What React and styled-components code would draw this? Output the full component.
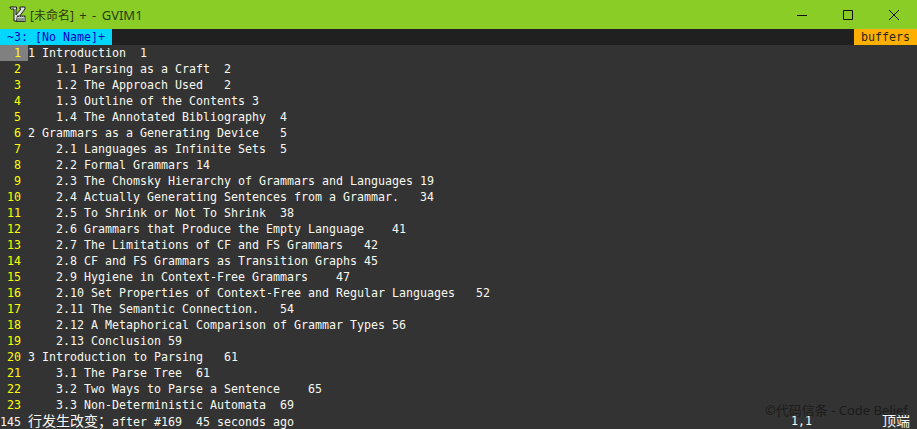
import React from "react";
import styled, { createGlobalStyle } from "styled-components";

const lines = [
    "1 Introduction  1",
    "    1.1 Parsing as a Craft  2",
    "    1.2 The Approach Used   2",
    "    1.3 Outline of the Contents 3",
    "    1.4 The Annotated Bibliography  4",
    "2 Grammars as a Generating Device   5",
    "    2.1 Languages as Infinite Sets  5",
    "    2.2 Formal Grammars 14",
    "    2.3 The Chomsky Hierarchy of Grammars and Languages 19",
    "    2.4 Actually Generating Sentences from a Grammar.   34",
    "    2.5 To Shrink or Not To Shrink  38",
    "    2.6 Grammars that Produce the Empty Language    41",
    "    2.7 The Limitations of CF and FS Grammars   42",
    "    2.8 CF and FS Grammars as Transition Graphs 45",
    "    2.9 Hygiene in Context-Free Grammars    47",
    "    2.10 Set Properties of Context-Free and Regular Languages   52",
    "    2.11 The Semantic Connection.   54",
    "    2.12 A Metaphorical Comparison of Grammar Types 56",
    "    2.13 Conclusion 59",
    "3 Introduction to Parsing   61",
    "    3.1 The Parse Tree  61",
    "    3.2 Two Ways to Parse a Sentence    65",
    "    3.3 Non-Deterministic Automata  69",
];

const GlobalStyle = createGlobalStyle`
    html, body {
        margin: 0;
        padding: 0;
        background: #333333;
    }
`;

const Window = styled.div`
    width: 917px;
    height: 429px;
    overflow: hidden;
    display: flex;
    flex-direction: column;
    background: #333333;
    font-family: "DejaVu Sans Mono", "Noto Sans CJK SC", monospace;
    font-size: 11.63px;
    color: #f8f8f0;
`;

const TitleBar = styled.div`
    height: 29px;
    flex: none;
    display: flex;
    align-items: center;
    background: #8acd27;
    color: #2c3a12;
    font-family: "Noto Sans", "Noto Sans CJK SC", sans-serif;
    font-size: 13px;
`;

const AppIcon = styled.svg`
    width: 17px;
    height: 17px;
    margin-left: 9px;
    margin-right: 4px;
`;

const TitleText = styled.span`
    flex: 1;
    white-space: pre;
    word-spacing: 2px;
`;

const TitleCjk = styled.span`
    font-size: 12px;
`;

const WinButton = styled.div`
    width: 46px;
    height: 29px;
    display: flex;
    align-items: center;
    justify-content: center;
    svg {
        display: block;
    }
`;

const TabLine = styled.div`
    height: 16px;
    flex: none;
    display: flex;
    justify-content: space-between;
    background: #202020;
    line-height: 16px;
    white-space: pre;
`;

const ActiveTab = styled.span`
    background: #00d7ff;
    color: #0000c8;
    width: 112px;
`;

const BuffersTag = styled.span`
    background: #ffaf00;
    color: #262626;
    width: 63px;
    padding-left: 7px;
    box-sizing: border-box;
`;

const Editor = styled.div`
    flex: 1;
    display: flex;
    flex-direction: column;
`;

const Row = styled.div`
    height: 16px;
    display: flex;
    line-height: 16px;
    white-space: pre;
`;

const LineNo = styled.span`
    width: 28px;
    flex: none;
    padding-right: 7px;
    box-sizing: border-box;
    text-align: right;
    color: #ffff00;
    background: ${(p) => (p.$current ? "#808080" : "transparent")};
`;

const StatusRow = styled.div`
    position: relative;
    height: 16px;
    flex: none;
    display: flex;
    line-height: 16px;
    white-space: pre;
`;

const Message = styled.span`
    width: 791px;
    flex: none;
`;

const Wide = styled.span`
    font-size: 14px;
`;

const Ruler = styled.span`
    width: 91px;
    flex: none;
`;

const Watermark = styled.span`
    position: absolute;
    left: 765px;
    top: -11px;
    color: #1c1c1c;
    font-family: "Noto Sans", "Noto Sans CJK SC", sans-serif;
    font-size: 13px;
    line-height: 16px;
`;

const App = () => {
    return (
        <>
            <GlobalStyle />
            <Window>
                <TitleBar>
                    <AppIcon viewBox="0 0 17 17">
                        <path
                            d="M1 1h6.5v2H7v6l5-6h-1V1h5v2l-9 12H5V3H2.500L1 2z"
                            fill="#e4e4e4"
                            stroke="#1c1c1c"
                        />
                        <path d="M8 9.500h8.500V16H7z" fill="#2e3a2e" />
                        <path
                            d="M9 15v-4M9 12l1-1h1v4M11 12l1-1h1v4M13 12l1-1h1v4"
                            fill="none"
                            stroke="#e8e8e8"
                        />
                    </AppIcon>
                    <TitleText>
                        <TitleCjk>[未命名]</TitleCjk> + - GVIM1
                    </TitleText>
                    <WinButton>
                        <svg width="10" height="10" viewBox="0 0 10 10">
                            <path d="M0 5.5h10" stroke="#111" />
                        </svg>
                    </WinButton>
                    <WinButton>
                        <svg width="10" height="10" viewBox="0 0 10 10">
                            <path d="M.5.5h9v9h-9z" fill="none" stroke="#111" />
                        </svg>
                    </WinButton>
                    <WinButton>
                        <svg width="10" height="10" viewBox="0 0 10 10">
                            <path d="M0 0l10 10M10 0L0 10" stroke="#111" />
                        </svg>
                    </WinButton>
                </TitleBar>
                <TabLine>
                    <ActiveTab> ~3: [No Name]+</ActiveTab>
                    <BuffersTag>buffers</BuffersTag>
                </TabLine>
                <Editor>
                    {lines.map((line, i) => (
                        <Row key={i}>
                            <LineNo $current={i === 0}>{i + 1}</LineNo>
                            <span>{line}</span>
                        </Row>
                    ))}
                </Editor>
                <StatusRow>
                    <Message>
                        145 <Wide>行发生改变；</Wide>after #169  45 seconds ago
                    </Message>
                    <Ruler>1,1</Ruler>
                    <Wide>顶端</Wide>
                    <Watermark>©代码信条 - Code Belief</Watermark>
                </StatusRow>
            </Window>
        </>
    );
};

export default App;
